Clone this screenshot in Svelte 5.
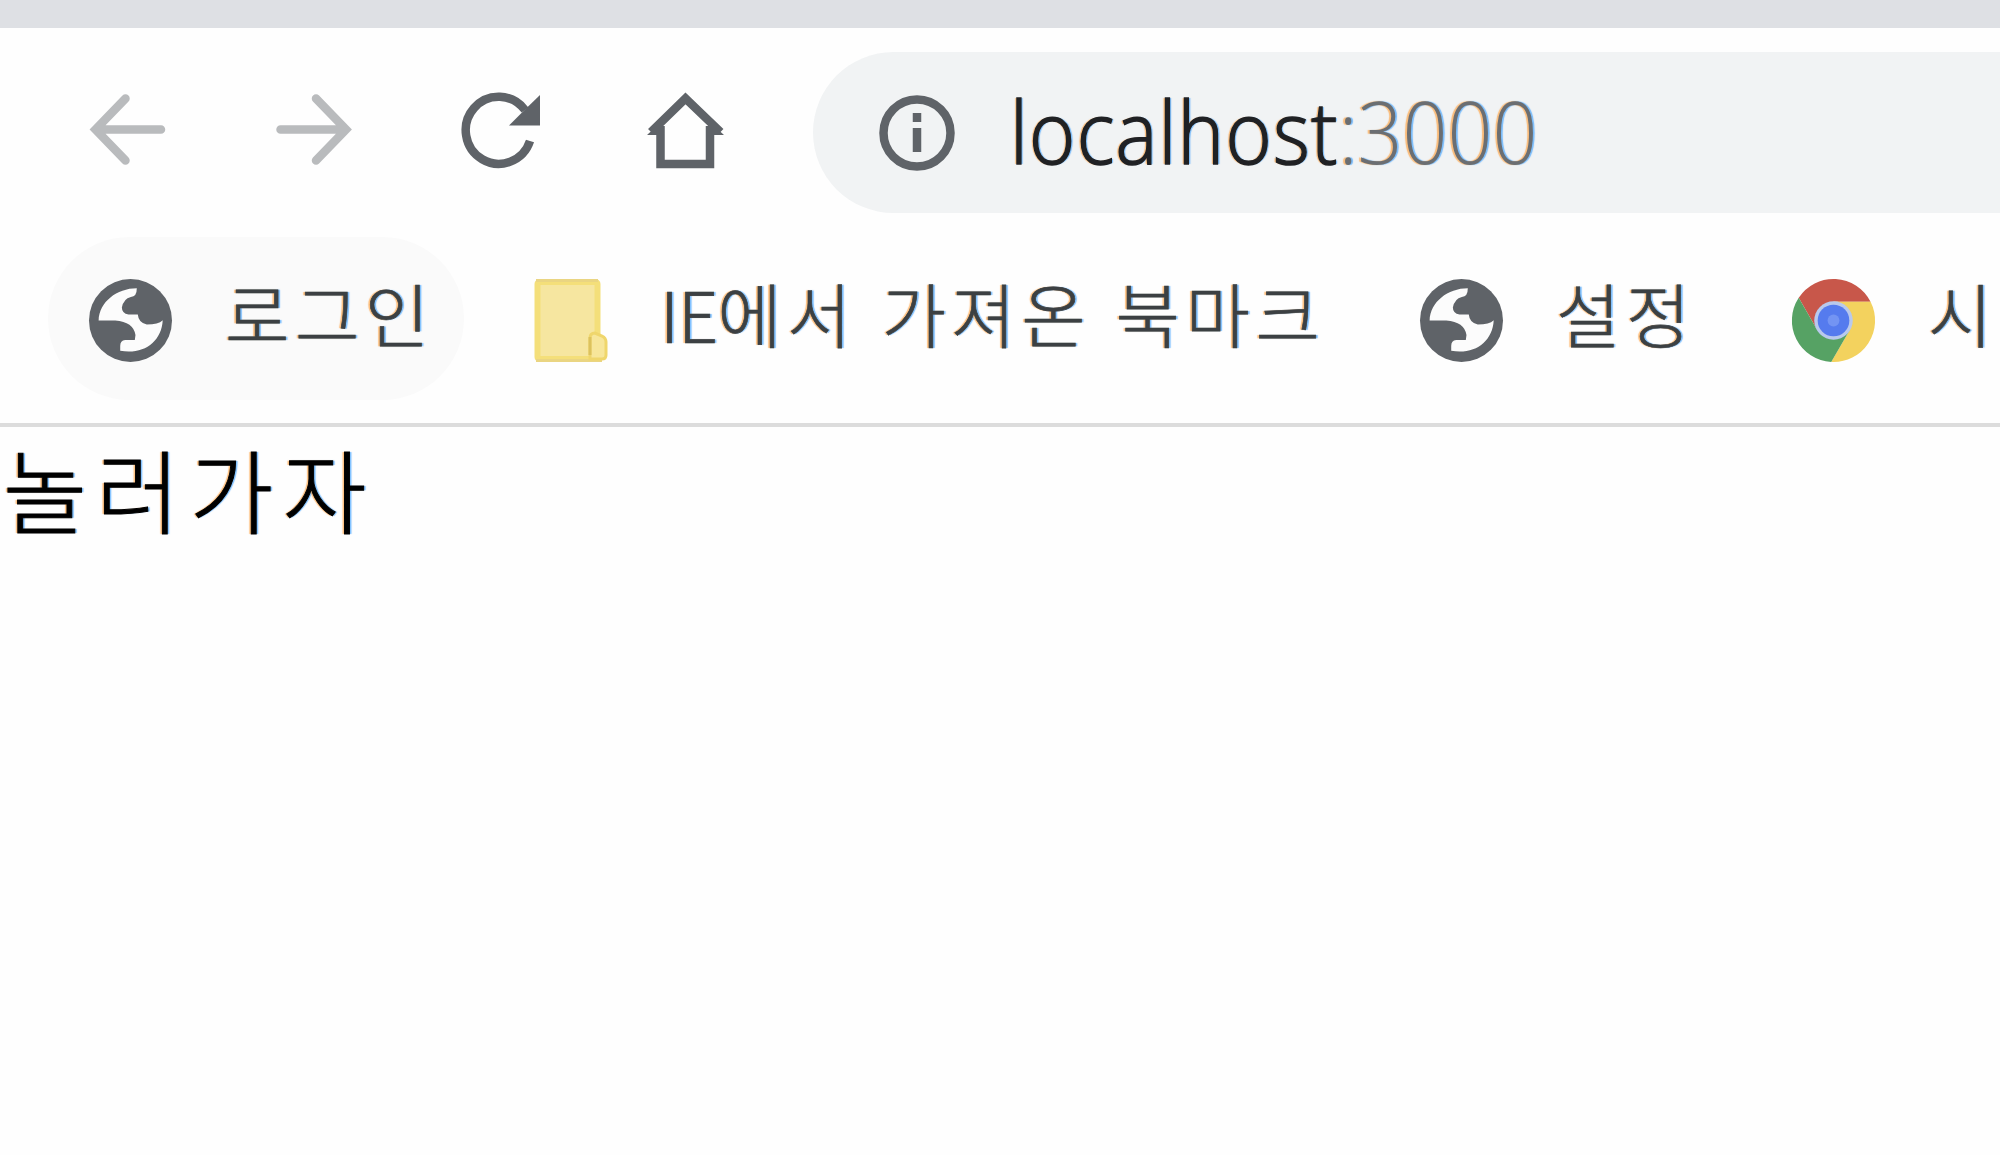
<script>
  const bookmarks = [
    { kind: 'globe', label: '로그인', slot: 'login', active: true },
    { kind: 'folder', latin: 'IE', label: '에서 가져온 북마크', slot: 'imported' },
    { kind: 'globe', label: '설정', slot: 'settings' },
    { kind: 'chrome', label: '시', slot: 'start' }
  ];
</script>

<div class="window">
  <div class="tabstrip"></div>
  <div class="toolbar">
    <div class="nav">
      <svg class="dim" viewBox="0 0 84 84">
        <path d="M39.500 9.500L9.500 40.500L39.500 71.500M11 40.500H75" />
      </svg>
      <svg class="dim" viewBox="0 0 84 84">
        <path d="M44 9.500L74 40.500L44 71.500M73 40.500H8.500" />
      </svg>
      <svg viewBox="0 0 84 84">
        <path d="M67 21A33 33.500 0 1 0 72 52" />
        <path class="solid" d="M82 6V36.500H51L66 21.500Z" />
      </svg>
      <svg viewBox="0 0 84 84">
        <path d="M16.500 37V75H66V37M7 43L41.500 9.500L76.500 43" />
        <path class="solid" d="M3 46L15 35V46ZM80 46L68 35V46Z" />
      </svg>
    </div>
    <div class="omnibox">
      <svg class="info" viewBox="0 0 78 78">
        <circle cx="39" cy="39" r="33.500" />
        <path d="M39 34V58M39 19V28" />
      </svg>
      <div class="url"><span class="host">localhost</span><span class="port">:3000</span></div>
    </div>
  </div>
  <div class="bookmarks">
    {#each bookmarks as b}
      <div class="bookmark {b.slot}" class:active={b.active}>
        {#if b.kind === 'globe'}
          <svg viewBox="266 176 250 250">
            <circle cx="391" cy="301" r="125" fill="#5f6368" />
            <path class="land" d="M410 204C350 204 297 245 295 301H345Q400 305 406 345L404 360H375Q360 362 360 378V392C430 405 485 365 488 300Q475 313 440 313Q415 308 413 283H385Q365 280 365 262Q370 235 392 230Q410 230 410 204Z" />
          </svg>
        {:else if b.kind === 'folder'}
          <svg viewBox="0 0 83 83">
            <rect x="13.500" y="3" width="60" height="77" rx="2" fill="#f6e6a0" stroke="#f4df7a" stroke-width="6" />
            <path d="M12 1.500H74M12 81.500H78" stroke="#ead582" stroke-width="3" fill="none" />
            <path d="M66 80V59Q66 54 71 54L78 57Q82 59 82 63V76Q82 80 78 80Z" fill="#f7e69a" stroke="#efd66c" stroke-width="3" />
            <path d="M66 76V58" stroke="#dcc25d" stroke-width="3" />
          </svg>
        {:else}
          <svg viewBox="-42 -42 84 84">
            <path fill="#c8574a" d="M-35.200 -23A42 42 0 0 1 37.500 -19H0L-16.450 9.500Z" />
            <path fill="#f3d25e" d="M37.500 -19A42 42 0 0 1 -2.300 42L16.450 9.500L0 -19Z" />
            <path fill="#56a264" d="M-2.300 42A42 42 0 0 1 -35.200 -23L-16.450 9.500H16.450Z" />
            <circle r="19.500" fill="#b9c9ec" />
            <circle r="16" fill="#557bee" />
            <circle r="6" fill="#7394f3" />
          </svg>
        {/if}
        <span class="label">{#if b.latin}<span class="latin">{b.latin}</span>{/if}{b.label}</span>
      </div>
    {/each}
  </div>
  <main>놀러가자</main>
</div>

<style>
  :global(body) {
    background: #fefefe;
    overflow: hidden;
  }
  .window {
    width: 2000px;
    height: 1155px;
    overflow: hidden;
    font-family: 'Noto Sans CJK KR', sans-serif;
    font-weight: 300;
    white-space: nowrap;
    -webkit-text-stroke: 0.700px currentColor;
    /* colour fringes of subpixel-rendered text */
    text-shadow: -2px 0 1px rgba(255, 150, 40, 0.6), 2px 0 1px rgba(40, 150, 255, 0.6);
  }
  svg {
    display: block;
    flex: none;
    overflow: visible;
  }
  .tabstrip {
    height: 28px;
    background: #dee0e4;
  }
  .toolbar {
    display: flex;
    height: 209px;
    box-sizing: border-box;
    padding: 24px 0 24px 86px;
  }
  .nav {
    display: flex;
    align-items: center;
    gap: 102px;
    padding-bottom: 4px;
    margin-right: 85px;
  }
  .nav svg {
    width: 84px;
    height: 84px;
    fill: none;
    stroke: #5f6368;
    stroke-width: 8.500;
  }
  .nav svg.dim {
    stroke: #b9bbbd;
    stroke-linecap: round;
  }
  .nav .solid {
    fill: #5f6368;
    stroke: none;
  }
  .omnibox {
    display: flex;
    flex: 1;
    align-items: center;
    gap: 54px;
    padding-left: 65px;
    border-radius: 81px 0 0 81px;
    background: #f1f3f4;
  }
  .info {
    width: 78px;
    height: 78px;
    fill: none;
    stroke: #5f6368;
    stroke-width: 8.500;
  }
  .url {
    padding-bottom: 4px;
    font: 300 86px/157px 'Open Sans', sans-serif;
    transform: scaleX(0.917);
    transform-origin: left;
  }
  .host {
    color: #202124;
    letter-spacing: 1.400px;
    -webkit-text-stroke-width: 1.500px;
  }
  .port {
    color: #6b6e72;
    -webkit-text-stroke-width: 0;
  }
  .bookmarks {
    display: flex;
    gap: 19px;
    height: 190px;
    box-sizing: border-box;
    padding: 0 0 23px 48px;
    border-bottom: 4px solid #dcdcdc;
  }
  .bookmark {
    display: flex;
    flex: none;
    align-items: center;
    gap: 53px;
    height: 163px;
    padding: 0 41px;
    border-radius: 82px;
    color: #3c4043;
    font-size: 70px;
    line-height: 149px;
    letter-spacing: 5.500px;
    word-spacing: 3.500px;
  }
  .bookmark svg {
    width: 83px;
    height: 83px;
    margin-top: 3px;
  }
  .label {
    padding-bottom: 12px;
  }
  .latin {
    letter-spacing: -1px;
  }
  .active {
    background: #fafafa;
  }
  .land {
    fill: #fcfcfc;
  }
  .login .label {
    width: 198px;
  }
  .imported .label {
    width: 659px;
  }
  .settings .label {
    width: 135px;
  }
  main {
    padding-left: 3px;
    color: #000;
    font-size: 91px;
    line-height: 120px;
    letter-spacing: 9.500px;
    -webkit-text-stroke-width: 1px;
  }
</style>
